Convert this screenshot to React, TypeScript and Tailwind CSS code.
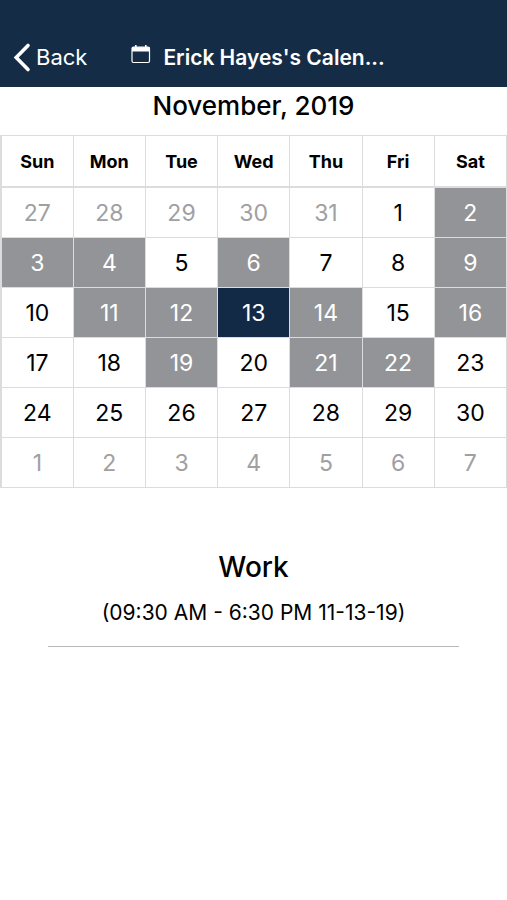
import React, { useState } from 'react';

type Day = {
  key: string;
  label: number;
  outside: boolean;
};

const WEEKDAYS = ['Sun', 'Mon', 'Tue', 'Wed', 'Thu', 'Fri', 'Sat'];
const BOOKED = [2, 3, 4, 6, 9, 11, 12, 14, 16, 19, 21, 22];

const buildWeeks = (): Day[][] => {
  const start = new Date(2019, 9, 27);
  return Array.from({ length: 6 }, (_, week) =>
    Array.from({ length: 7 }, (_, day) => {
      const date = new Date(start.getFullYear(), start.getMonth(), start.getDate() + week * 7 + day);
      return {
        key: `${date.getMonth() + 1}-${date.getDate()}`,
        label: date.getDate(),
        outside: date.getMonth() !== 10,
      };
    })
  );
};

const weeks = buildWeeks();

const dayClass = (day: Day, selected: string) => {
  if (day.key === selected) return 'bg-[#122a45] text-white';
  if (day.outside) return 'bg-white text-[#a0a0a2]';
  if (BOOKED.includes(day.label)) return 'bg-[#929497] text-white';
  return 'bg-white text-black';
};

const Header: React.FC = () => (
  <header className="bg-[#152c46] text-white pt-7 h-[87px] flex items-center px-3">
    <button type="button" className="flex items-center gap-1 pb-0.5 text-[22px] leading-7">
      <svg
        className="w-5 h-8"
        viewBox="0 0 20 32"
        fill="none"
        stroke="currentColor"
        strokeWidth="3.6"
        strokeLinecap="round"
      >
        <path d="M16 4.5 4.2 16.5 16 28.5" />
      </svg>
      Back
    </button>
    <div className="ml-11 flex items-center gap-3">
      <svg className="w-5 h-5 mb-2" viewBox="0 0 20 20" fill="none" stroke="currentColor">
        <rect x="1" y="3" width="17.5" height="15.5" rx="1.5" strokeWidth="1.2" />
        <path d="M1 5.3h17.5" strokeWidth="4.4" />
        <path d="M4.8 1v3M14.8 1v3" strokeWidth="1.6" />
      </svg>
      <h1 className="text-[21px] leading-7 font-semibold">Erick Hayes's Calen...</h1>
    </div>
  </header>
);

const App: React.FC = () => {
  const [selected, setSelected] = useState('11-13');

  return (
    <div className="min-h-screen bg-white text-black font-['Inter',sans-serif]">
      <Header />

      <main>
        <h2 className="h-12 pt-[3px] text-center text-[26px] leading-8 font-medium">November, 2019</h2>

        {/* Month grid */}
        <table className="w-full table-fixed border-collapse border border-l-2 border-[#dcdcdc]">
          <thead>
            <tr className="h-[51px] border-b-2 border-[#dcdcdc]">
              {WEEKDAYS.map((name) => (
                <th key={name} scope="col" className="border-x border-[#dcdcdc] p-0 pt-0.5 text-lg font-bold">
                  {name}
                </th>
              ))}
            </tr>
          </thead>
          <tbody>
            {weeks.map((week) => (
              <tr key={week[0].key} className="h-[50px]">
                {week.map((day) => (
                  <td key={day.key} className="h-[50px] border border-[#dcdcdc] p-0">
                    <button
                      type="button"
                      onClick={() => setSelected(day.key)}
                      className={`block w-full h-[49px] pt-0.5 text-[23px] leading-7 ${dayClass(day, selected)}`}
                    >
                      {day.label}
                    </button>
                  </td>
                ))}
              </tr>
            ))}
          </tbody>
        </table>

        <section className="mx-12 mt-[63px] pb-[19px] border-b border-[#b8b8b8] text-center">
          <h3 className="text-[28px] leading-8 font-medium">Work</h3>
          <p className="mt-4 text-[21px] leading-7">(09:30 AM - 6:30 PM 11-13-19)</p>
        </section>
      </main>
    </div>
  );
};

export default App;
